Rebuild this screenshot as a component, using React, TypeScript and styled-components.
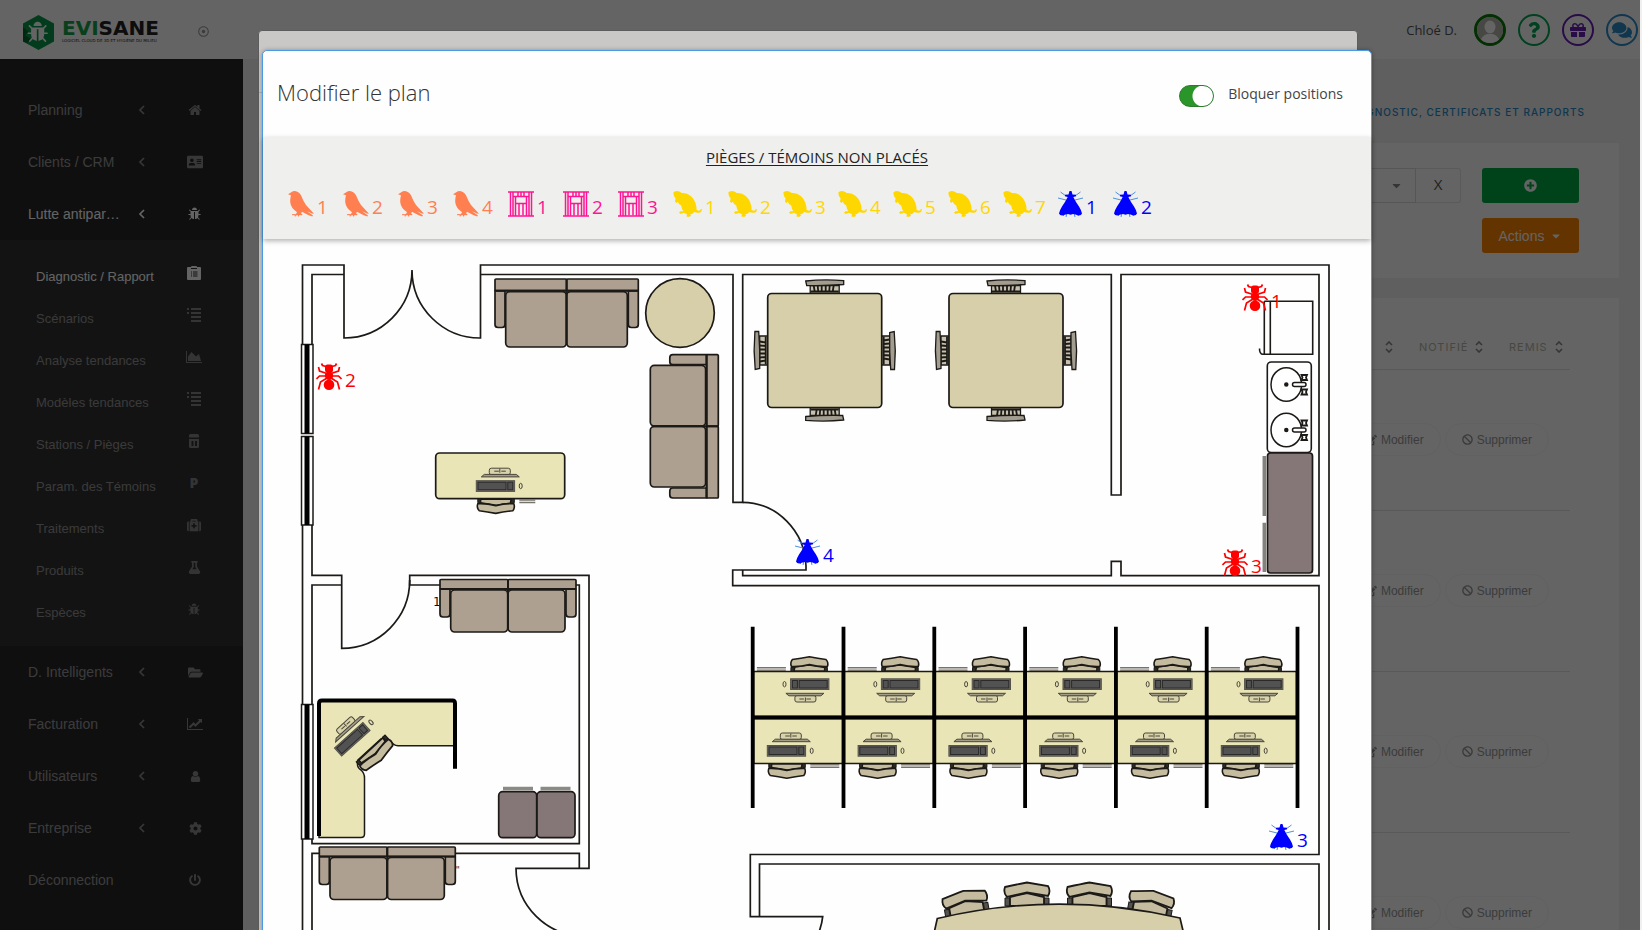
import React from "react";
import styled, { createGlobalStyle } from "styled-components";
import {
  FaAddressCard,
  FaBan,
  FaCaretDown,
  FaCog,
  FaComments,
  FaEdit,
  FaFlask,
  FaFolderOpen,
  FaGift,
  FaMedkit,
  FaPlusCircle,
  FaPowerOff,
  FaQuestion,
  FaRegDotCircle,
} from "react-icons/fa";

const sans = `"Liberation Sans", Arial, sans-serif`;
const humanist = `"Open Sans", "Noto Sans", sans-serif`;
const geometric = `Inter, "Liberation Sans", sans-serif`;

const GlobalStyle = createGlobalStyle`
  *, *::before, *::after { box-sizing: border-box; }
  body { margin: 0; font-family: ${sans}; font-size: 14px; color: #333; }
  button, select, input { font: inherit; color: inherit; margin: 0; }
  a { color: inherit; text-decoration: none; }
  h1, h2, p { margin: 0; }
  ul { list-style: none; margin: 0; padding: 0; }
`;

/* ---------- Page shell ---------- */

const Page = styled.div`
  position: relative;
  display: flex;
  flex-direction: column;
  height: 100vh;
  overflow: hidden;
  background: #f2f2f2;
  border-right: 2px solid #f0f0f0;
`;

const TopBar = styled.header`
  flex: none;
  display: flex;
  align-items: center;
  height: 59px;
  padding: 0 2px 0 23px;
  background: #fff;
`;

const Brand = styled.a`
  display: flex;
  align-items: center;
  gap: 8px;
  width: 175px;
  height: 60px;
  padding-top: 5px;
`;

const BrandText = styled.span`
  display: flex;
  flex-direction: column;
  padding-bottom: 3px;
  white-space: nowrap;
`;

const BrandName = styled.span`
  font: 700 20px/20px "DejaVu Sans", sans-serif;
  color: #222;
  b { color: #16a34a; }
`;

const BrandTagline = styled.span`
  font: 400 4px/5px "DejaVu Sans", sans-serif;
  color: #222;
`;

const PinToggle = styled.button`
  display: flex;
  padding: 4px 0 0;
  border: 0;
  background: none;
  font-size: 11px;
  color: #999;
`;

const Account = styled.div`
  display: flex;
  align-items: center;
  gap: 12px;
  margin-left: auto;
`;

const UserName = styled.span`
  margin-right: 5px;
  font: 400 13px/20px ${humanist};
  color: #555;
`;

const RoundButton = styled.button<{ $color: string; $ring?: number }>`
  display: flex;
  align-items: center;
  justify-content: center;
  width: 32px;
  height: 32px;
  padding: 0;
  overflow: hidden;
  border: ${(p) => p.$ring ?? 2}px solid ${(p) => p.$color};
  border-radius: 50%;
  background: #fff;
  color: ${(p) => p.$color};
  font-size: 16px;
`;

const Body = styled.div`
  flex: 1;
  display: flex;
  min-height: 0;
`;

/* ---------- Sidebar ---------- */

const Sidebar = styled.nav`
  flex: none;
  width: 243px;
  padding-top: 25px;
  background: #292929;
`;

const MenuLink = styled.a<{ $active?: boolean }>`
  display: grid;
  grid-template-columns: 106px 16px 1fr;
  align-items: center;
  height: 52px;
  padding: 0 35px 0 28px;
  color: ${(p) => (p.$active ? "#fff" : "#999")};
  svg { color: ${(p) => (p.$active ? "#fff" : "#8c8c8c")}; }
`;

const MenuIcon = styled.span`
  display: flex;
  justify-content: center;
  width: 26px;
  margin-left: auto;
  font-size: 14px;
`;

const SubMenu = styled.ul`
  padding: 14px 0;
  background: #333;
`;

const SubLink = styled.a<{ $active?: boolean }>`
  display: flex;
  align-items: center;
  justify-content: space-between;
  height: 42px;
  padding: 2px 36px 0;
  font-size: 13px;
  color: ${(p) => (p.$active ? "#fff" : "#959595")};
  svg, b { color: ${(p) => (p.$active ? "#fff" : "#868686")}; }
`;

const SubIcon = styled.span`
  display: flex;
  justify-content: center;
  width: 26px;
  padding-bottom: 6px;
  font: 800 14px/14px "Open Sans", sans-serif;
`;

/* ---------- Content behind the dialog ---------- */

const Content = styled.main`
  flex: 1;
  min-width: 0;
  padding: 45px 21px 0;
`;

const Breadcrumb = styled.p`
  height: 39px;
  padding-right: 34px;
  text-align: right;
  font: 500 10px/16px ${geometric};
  letter-spacing: 1px;
  color: #2a8cc9;
`;

const Card = styled.section`
  background: #fff;
  margin-bottom: 20px;
`;

const FilterCard = styled(Card)`
  display: flex;
  justify-content: flex-end;
  gap: 21px;
  height: 135px;
  padding: 25px 40px;
`;

const FilterGroup = styled.div`
  display: flex;
  height: 35px;
`;

const FilterSelect = styled.div`
  position: relative;
  display: flex;
  align-items: center;
  width: 360px;
  color: #888;
  svg { position: absolute; right: 13px; pointer-events: none; }
  select {
    width: 100%;
    height: 100%;
    appearance: none;
    border: 1px solid #ddd;
    background: #fff;
  }
`;

const ClearButton = styled.button`
  width: 45px;
  padding: 0 0 3px;
  border: 1px solid #e6e6e6;
  border-left: 0;
  border-radius: 0 3px 3px 0;
  background: #fff;
  font: 400 15px/20px ${humanist};
  color: #555;
`;

const ButtonColumn = styled.div`
  display: flex;
  flex-direction: column;
  gap: 15px;
`;

const SolidButton = styled.button<{ $color: string }>`
  display: flex;
  align-items: center;
  justify-content: center;
  gap: 6px;
  width: 97px;
  height: 35px;
  padding: 0;
  border: 0;
  border-radius: 3px;
  background: ${(p) => p.$color};
  color: #fff;
`;

const TableCard = styled(Card)`
  padding: 27px 49px 0;
`;

const ReportTable = styled.table`
  width: 100%;
  table-layout: fixed;
  border-collapse: collapse;
  th {
    height: 44px;
    padding: 0 0 0 19px;
    text-align: left;
    font: 400 11px/14px ${geometric};
    letter-spacing: 1px;
    color: #b8b7aa;
    border-bottom: 1px solid #e2e2e2;
  }
  td { height: 161px; padding: 0; border-bottom: 1px solid #e2e2e2; }
  tr:first-child td { height: 141px; }
`;

const ColumnHead = styled.span`
  display: flex;
  align-items: center;
  justify-content: space-between;
  padding: 0 7px 0 0;
`;

const RowActions = styled.div`
  display: flex;
  justify-content: flex-end;
  gap: 4px;
  padding-right: 21px;
`;

const PillButton = styled.button`
  display: flex;
  align-items: center;
  gap: 4px;
  height: 33px;
  padding: 0 16px;
  border: 1px solid #f7f7f7;
  border-radius: 17px;
  background: none;
  font-size: 12px;
  color: #999;
`;

/* ---------- Layers over the page ---------- */

const Backdrop = styled.div<{ $dim: number; $shift: number }>`
  position: absolute;
  inset: 0;
  display: flex;
  justify-content: center;
  align-items: flex-start;
  padding-right: ${(p) => p.$shift}px;
  background: rgba(0, 0, 0, ${(p) => p.$dim});
`;

const BackDialog = styled.div`
  width: 1100px;
  max-width: 92%;
  height: 100%;
  margin-top: 30px;
  border: 1px solid #777;
  border-radius: 4px;
  background: #fffefb;
`;

const BackDialogHeader = styled.div`
  height: 62px;
  border-bottom: 1px solid #ddd;
`;

const Dialog = styled.section`
  width: 1110px;
  max-width: 94%;
  margin-top: 50px;
  border: 1px solid #4a9ae6;
  border-radius: 5px;
  background: #fefefe;
  box-shadow: 0 0 4px rgba(0, 0, 0, 0.3);
`;

const DialogHeader = styled.header`
  display: flex;
  align-items: center;
  justify-content: space-between;
  height: 86px;
  padding: 0 28px 4px 14px;
`;

const DialogTitle = styled.h1`
  font: 300 22px/30px ${humanist};
  color: #333;
`;

const SwitchLabel = styled.label`
  display: flex;
  align-items: center;
  gap: 14px;
  padding-top: 4px;
  font: 400 14px/20px ${humanist};
  color: #444;
`;

const SwitchInput = styled.input`
  appearance: none;
  width: 35px;
  height: 22px;
  margin-top: 4px;
  border: 1px solid #2c7a2c;
  border-radius: 11px;
  background: radial-gradient(circle at 23px 10px, #fff 10px, #2a962a 11px);
`;

const TrayPanel = styled.section`
  position: relative;
  height: 102px;
  padding-top: 9px;
  background: #efefed;
  box-shadow: 0 2px 5px rgba(0, 0, 0, 0.3);
`;

const TrayTitle = styled.h2`
  text-align: center;
  font: 400 15px/22px ${humanist};
  text-decoration: underline;
  text-underline-offset: 2px;
  color: #222;
`;

const TrayList = styled.ul`
  display: flex;
  padding: 23px 25px 0;
`;

const TrayItem = styled.li`
  width: 55px;
`;

const TrapTag = styled.span<{ $color: string }>`
  display: inline-flex;
  align-items: flex-end;
  gap: 3px;
  font: 400 19px/20px ${humanist};
  color: ${(p) => p.$color};
  svg { display: block; flex: none; }
`;

const Plan = styled.div`
  position: relative;
`;

const PlanDrawing = styled.svg`
  display: block;
  width: 100%;
  height: auto;
`;

const Pin = styled.button<{ $x: number; $y: number }>`
  position: absolute;
  left: ${(p) => p.$x}%;
  top: ${(p) => p.$y}%;
  padding: 0;
  border: 0;
  background: none;
`;

/* ---------- Small glyphs ---------- */

const BUG =
  "M1632 960q0 26-19 45t-45 19h-224q0 171-67 290l208 209q19 19 19 45t-19 45q-18 19-45 19t-45-19l-198-197q-5 5-15 13t-42 28.5-65 36.5-82 29-97 13v-896h-128v896q-51 0-101.5-13.5t-87-33-66-39-43.5-32.5l-15-14-183 207q-20 21-48 21-24 0-43-16-19-18-20.5-44.5t15.5-46.5l202-227q-58-114-58-274h-224q-26 0-45-19t-19-45 19-45 45-19h224v-294l-173-173q-19-19-19-45t19-45 45-19 45 19l173 173h844l173-173q19-19 45-19t45 19 19 45-19 45l-173 173v294h224q26 0 45 19t19 45zm-480-576h-640q0-133 93.5-226.5t226.5-93.5 226.5 93.5 93.5 226.5z";
const HOME =
  "M1472 992v480q0 26-19 45t-45 19h-384v-384h-256v384h-384q-26 0-45-19t-19-45v-480q0-1 .5-3t.5-3l575-474 575 474q1 2 1 6zm223-69l-62 74q-8 9-21 11h-3q-13 0-21-7l-692-577-692 577q-12 8-24 7-13-2-21-11l-62-74q-8-10-7-23.5t11-21.5l719-599q32-26 76-26t76 26l244 204v-195q0-14 9-23t23-9h192q14 0 23 9t9 23v408l219 182q10 8 11 21.5t-7 23.5z";
const TREND =
  "M2048 1536v128h-2048v-1536h128v1408h1920zm-128-1248v435q0 21-19.5 29.5t-35.5-7.5l-121-121-633 633q-10 10-23 10t-23-10l-233-233-416 416-192-192 585-585q10-10 23-10t23 10l233 233 464-464-121-121q-16-16-7.5-35.5t29.5-19.5h435q14 0 23 9t9 23z";
const AREA = "M2048 1536v128h-2048v-1536h128v1408h1920zm-384-1024l256 896h-1664v-576l448-576 576 576z";
const PERSON =
  "M1536 1399q0 109-62.5 187t-150.5 78h-854q-88 0-150.5-78t-62.5-187q0-85 8.5-160.5t31.5-152 58.5-131 94-89 134.5-34.5q131 128 313 128t313-128q76 0 134.5 34.5t94 89 58.5 131 31.5 152 8.5 160.5zm-256-887q0 159-112.5 271.5t-271.5 112.5-271.5-112.5-112.5-271.5 112.5-271.5 271.5-112.5 271.5 112.5 112.5 271.5z";

const Awesome = ({ d, w = 1792, size = 14 }: { d: string; w?: number; size?: number }) => (
  <svg width={(size * w) / 1792} height={size} viewBox={`0 0 ${w} 1792`} fill="currentColor">
    <path d={d} />
  </svg>
);

const Chevron = () => (
  <svg width="16" height="12" viewBox="0 0 16 12" fill="none" stroke="currentColor" strokeWidth="1.700">
    <path d="M10 2 6 6l4 4" />
  </svg>
);

const ListIcon = () => (
  <svg width="14" height="14" viewBox="0 0 14 14" fill="currentColor">
    <path d="M0 0h2v2H0zM0 4h2v2H0zM4 0h10v2H4zM4 4h10v2H4zM4 8h10v2H4zM4 12h10v2H4z" />
  </svg>
);

const ClipboardIcon = () => (
  <svg width="14" height="14" viewBox="0 0 14 14">
    <path d="M0 2q0-1 1-1h3q0-1 1-1h4q1 0 1 1h3q1 0 1 1v11q0 1-1 1H1q-1 0-1-1z" fill="currentColor" />
    <path d="M4 2.500h6M4 6h1M6 6h4.500M4 8h1M6 8h4.500M4 10h1M6 10h4.500" stroke="#333" fill="none" />
  </svg>
);

const StationIcon = () => (
  <svg width="10" height="14" viewBox="0 0 10 14" fill="currentColor">
    <path d="M0 1.500Q0 0 1.500 0h7Q10 0 10 1.500V3.500H0zM0 5h10v7.500q0 1.500-1.500 1.500h-7Q0 14 0 12.500zM2.500 7v5h2V7zM6 7v5h2V7z" fillRule="evenodd" />
  </svg>
);

const SortIcon = () => (
  <svg width="8" height="12" viewBox="0 0 8 12" fill="none" stroke="#888" strokeWidth="1.600">
    <path d="M1 4l3-3 3 3M1 8l3 3 3-3" />
  </svg>
);

const HexLogo = () => (
  <svg width="31" height="35" viewBox="0 0 31 35">
    <path d="M15.500 0 31 8.500v18L15.500 35 0 26.500v-18z" fill="#0b9b4a" />
    <path d="M0 12 6 17 2 20 8 24 4 28 0 26.500z" fill="#056b30" />
    <g transform="translate(4 6) scale(.0128)" fill="#fff">
      <path d={BUG} />
    </g>
  </svg>
);

const AvatarIcon = () => (
  <svg width="26" height="26" viewBox="0 0 26 26">
    <rect width="26" height="26" fill="#b5b5ac" />
    <ellipse cx="13" cy="10" rx="5.500" ry="6.500" fill="#fff" />
    <path d="M3 26q1-7 7-9h6q6 2 7 9z" fill="#fff" />
  </svg>
);

/* ---------- Trap glyphs ---------- */

type Kind = "bird" | "cage" | "rat" | "fly" | "ant";

const kindColor: Record<Kind, string> = {
  bird: "#ff7f50",
  cage: "#ff1493",
  rat: "#ffd700",
  fly: "#0000ff",
  ant: "#ff0000",
};

const TrapGlyph = ({ kind }: { kind: Kind }) => {
  switch (kind) {
    case "bird":
      return (
        <svg width="26" height="26" viewBox="0 0 26 26" fill="currentColor">
          <path d="M0 3.200 3.300 1.300Q5.200-.3 8 .2 12 1 14 6.500q1.500 4 4 7.500l8 8.700-2-.2-5-2.300 6 4.300-.8 1-4-1.500-6.200-3.200-1 1.700 1.500.8-.5 1-2.500-.3-.5 1.700-1.200-.6.200-1-2.200.4-.4 1.200-1-.7.300-1L4 24.300l.3-1.200 3.200.2 1.500-1.500-.7-1.300Q3 17 2.300 11.500q-.4-3 .7-7.200z" />
        </svg>
      );
    case "cage":
      return (
        <svg width="26" height="26" viewBox="0 0 26 26" fill="none" stroke="currentColor" strokeWidth="1.500">
          <path d="M0 1h26M0 25h26M2.500 1v24M5 1v24M21 1v24M23.500 1v24" />
          <path d="M5 5.500h16M7.500 12.500h11M7.500 5v20M18.500 5v20M10 1v4M13 1v4M16 1v4M11 12.500v12M15 12.500v12" />
        </svg>
      );
    case "rat":
      return (
        <svg width="29" height="26" viewBox="0 0 30 26" preserveAspectRatio="none" fill="currentColor">
          <path d="M.3 1.500Q3-.5 6.500.4 8 1 9 2q5.500-.5 9 2.700 5 4 6 10.300.5 2 .3 4l2.500.8q1.800-.2 2-1.800l1.200.2q-.2 3-2.800 3.500-3 .3-5.200-.7-1.500 2-4.500 2.500l1.300.8-1.500 1.500-3.300-.1 .4-2.400-3-1.500-3.500 1.200-1.700-1.600 1.500-1.200 3 .1Q9 18 8.500 14.500L6.300 13 5 10.700 3.400 12 2 10.500l.7-3L1 5z" />
        </svg>
      );
    case "fly":
      return (
        <svg width="25" height="26" viewBox="0 0 25 26">
          <path d="M2.500 1 8 5M22.500 1 17 5M0 7l8 2M25 7l-8 2M4 23l2 2M9 22l-1 4M16 22l1 4M21 23l-1 2" stroke="#4f8fe0" strokeWidth="1" fill="none" />
          <path d="M11.500 0h2l1 3.500 3.500.2v1.500l-2.700.8q2.700 5.500 5.700 9.500 2.500 4 3 7-1 2.500-4.500 1.800L17.500 23.500l-2.500-.5-2.500.8-2.500-.8-2.500.5-2 .8Q2 25 1 22.500q.5-3 3-7Q7 11.500 9.700 6L7 5.200V3.700l3.500-.2z" fill="currentColor" />
        </svg>
      );
    case "ant":
      return (
        <svg width="26" height="27" viewBox="0 0 26 27" fill="none" stroke="currentColor" strokeWidth="1.700">
          <path d="M5.500.5 6.500 2.500 10 3.500M20.500.5 19.500 2.500 16 3.500M2.500 4l1 4 7.500 2.500M23.500 4l-1 4-7.500 2.500M.5 16l3-3H11M25.500 16l-3-3H15M2.500 26.500 4.500 19l6.500-4M23.500 26.500 21.500 19l-6.500-4" />
          <g fill="currentColor" stroke="none">
            <rect x="9" y="1.500" width="8" height="8" rx="2.500" />
            <ellipse cx="13" cy="12.800" rx="4.200" ry="4.200" />
            <ellipse cx="13" cy="21.700" rx="5.300" ry="5.300" />
          </g>
        </svg>
      );
  }
};

const Trap = ({ kind, n }: { kind: Kind; n: number }) => (
  <TrapTag $color={kindColor[kind]}>
    <TrapGlyph kind={kind} />
    {n}
  </TrapTag>
);

/* ---------- Floor plan ---------- */

const INK = "#1c1a17";
const CLOTH = "#ada090";
const WOOD = "#d6cfaa";
const DESK = "#e9e5b6";
const CABINET = "#857677";
const SEAT = "#c5bca0";

const Sofa = ({ w, h, back, arm }: { w: number; h: number; back: number; arm: number }) => {
  const mid = w / 2;
  return (
    <g fill={CLOTH} stroke={INK} strokeWidth="1.700">
      <path d={`M0 ${back}V${arm - 3}q0 3 3 3h4q3 0 3-3V${back}z`} />
      <path d={`M${w - 10} ${back}V${arm - 3}q0 3 3 3h4q3 0 3-3V${back}z`} />
      <rect x="0" y="0" width={mid} height={back} rx="1" />
      <rect x={mid} y="0" width={mid} height={back} rx="1" />
      <rect x="10.700" y={back + 1} width={mid - 11} height={h - back - 1} rx="4" />
      <rect x={mid} y={back + 1} width={mid - 11} height={h - back - 1} rx="4" />
      <path d={`M0 ${back}H${w}M${mid} 0V${h - 2}`} strokeWidth="2" />
    </g>
  );
};

const Computer = () => (
  <g stroke="#4a463c" strokeWidth="1">
    <rect x="13" y="-30.500" width="21" height="6.500" rx="2" fill="#d8d3a8" />
    <path d="M18-27.500h4.500M25-27.500h4.500M23.500-30v4" fill="none" />
    <path d="M8-24.300H40L43-21.800H5z" fill="#a29d86" />
    <rect x="0" y="-18" width="38.300" height="10.700" fill="#6a6862" stroke="#55534c" />
    <rect x="1.700" y="-16.500" width="28" height="7.500" fill="#525252" stroke="#2a2a2a" />
    <rect x="31.500" y="-16.500" width="5" height="7.500" fill="#525252" stroke="#2a2a2a" />
    <ellipse cx="44.400" cy="-12.700" rx="1.500" ry="2.700" fill={DESK} />
  </g>
);

const OfficeChair = () => (
  <g stroke={INK} strokeWidth="1.600" fill={SEAT}>
    <path d="M4 .5H35L34 4.500 20 6.500 4 4z" />
    <path d="M1.500 5Q10 4.500 19.500 7 29 4.500 37.500 5q1.500 4-1 7Q28 13 19.500 14.700 11 13 3 12 0 9 1.500 5z" />
    <path d="M1.500 0h3v4h-3zM35 0h3v4h-3z" fill="#2d2b27" strokeWidth="1" />
  </g>
);

const Drawers = ({ w }: { w: number }) => (
  <path d={`M43 1.200h${w}M43 3.700h${w}`} stroke="#77736a" strokeWidth="1.500" />
);

const Workstation = () => (
  <g>
    <rect x="1" y="1" width="89" height="45" rx="1" fill={DESK} stroke={INK} strokeWidth="1.500" />
    <g transform="translate(14.600 46)">
      <Computer />
      <OfficeChair />
      <Drawers w={29} />
    </g>
  </g>
);

const DiningChair = () => (
  <g stroke={INK} strokeWidth="1.300" fill="#a39d90">
    <path d="M-14.500 14V6h29v8z" fill="#c7c0ae" />
    <path d="M-11 6l1 6M-7 6l.5 6M-3 6v6M1 6v6M5 6l-.5 6M9 6l-1 6M-14 12h28" strokeWidth="1.800" />
    <path d="M-19 1.500Q0-.5 19 1.200V5Q0 6.500-18 6z" />
  </g>
);

const DiningTable = () => (
  <g>
    {[0, 90, 180, 270].map((a) => (
      <g key={a} transform={`rotate(${a}) translate(0 -71)`}>
        <DiningChair />
      </g>
    ))}
    <rect x="-57" y="-57" width="114" height="114" rx="4" fill={WOOD} stroke={INK} strokeWidth="1.700" />
  </g>
);

const MeetingChair = () => (
  <g stroke={INK} strokeWidth="1.800" fill={SEAT}>
    <path d="M-17 0v-9L0-13 17-9V0z" />
    <path d="M-22-19Q-8-22 0-23.500 9-22 21-20q3 5 0 10L0-13.500-20-9q-4-4-2-10z" />
    <path d="M-22-8h4.500v8H-22zM17.500-8H22v8h-4.500z" fill="#55534e" strokeWidth="1" />
  </g>
);

const Window = ({ y, h }: { y: number; h: number }) => (
  <g>
    <rect x="301.500" y={y} width="11.500" height={h} fill="#fff" stroke={INK} strokeWidth="1.500" />
    <rect x="304.500" y={y} width="5" height={h} fill="#000" />
  </g>
);

const Basin = ({ y }: { y: number }) => (
  <g fill="#fff" stroke={INK} strokeWidth="1.500">
    <ellipse cx="1286.300" cy={y} rx="15.300" ry="16.800" />
    <path d="M1301.500 375h5.500l-1 2.500 1 2.500h-5.500l1-2.500zM1301.500 389.500h5.500l-1 2.500 1 2.500h-5.500l1-2.500z" transform={`translate(0 ${y - 384.500})`} strokeWidth="1.800" />
    <rect x="1292.500" y={y - 2} width="13.500" height="4" rx="2" />
    <circle cx="1286.300" cy={y} r="1.500" fill={INK} />
  </g>
);

const BAY = 90.8;

const FloorPlan = () => (
  <PlanDrawing viewBox="263 239 1108 720" role="img" aria-label="Plan des locaux">
    <g fill="none" stroke={INK} strokeWidth="1.700">
      <path d="M302.500 344V265H344V338A68 68 0 0 0 412 270A68 68 0 0 0 480.500 338V265H1329V960" />
      <path d="M312 344V274.500H344" />
      <path d="M480.500 274.500H733V502.300H742.700V274.500H1111.300V495H1121V274.500H1319V575.700H1121V561.300H1111.300V575.700H742.700V570" />
      <path d="M742.700 502.300A64 66 0 0 1 806 566V570H732.700V585.700H1319V854.500H750.300V916.700H822.700Q822 924 819 932" />
      <path d="M759.500 916.700V864H1319V960" />
      <path d="M302.500 525V704.500M302.500 839V960" />
      <path d="M312 525V575.300H341.700V648.300A68 68 0 0 0 409.700 580V575.300H589V868.300H516A68 68 0 0 0 584 936" />
      <path d="M341.700 585H312V704.500M409.700 580V585H579.300V843.700H312V839" />
      <path d="M312 960V853.300H579.300V868.300" />
    </g>
    <Window y={344.500} h={89} />
    <Window y={436.500} h={88.500} />
    <Window y={704.500} h={134.500} />

    <g transform="translate(495 279)"><Sofa w={143.300} h={68} back={11.700} arm={48.500} /></g>
    <g transform="translate(718.300 354.700) rotate(90)"><Sofa w={143.300} h={68} back={11.700} arm={48.500} /></g>
    <g transform="translate(440 579.500)"><Sofa w={136} h={52.500} back={9.500} arm={37.500} /></g>
    <g transform="translate(319.300 847)"><Sofa w={136} h={52.500} back={9.500} arm={37.500} /></g>
    <circle cx="680" cy="313" r="34.300" fill={WOOD} stroke={INK} strokeWidth="1.700" />

    <rect x="435.700" y="453" width="129" height="45.700" rx="4" fill={DESK} stroke={INK} strokeWidth="1.700" />
    <g transform="translate(476.300 498.700)">
      <Computer />
      <OfficeChair />
      <Drawers w={16} />
    </g>

    <path d="M319 701H455V745.700H398Q393 745.500 391 741 387 737 381 739L358 760Q356 767 361 770 364.500 773 364.500 778V834q0 3.500-3.500 3.500H319z" fill={DESK} stroke={INK} strokeWidth="1.500" />
    <path d="M319 836V703.500Q319 700.500 322 700.500H452.500Q455 700.500 455 703.500V768.700" fill="none" stroke="#000" strokeWidth="4" />
    <g transform="translate(346.500 761.500) rotate(-42)"><Computer /></g>
    <g transform="translate(355 763) rotate(-43) scale(1.080)"><OfficeChair /></g>

    <path d="M503 788.500h30M540.500 788.500h30" stroke="#8b8b86" strokeWidth="3.500" />
    <g fill={CABINET} stroke={INK} strokeWidth="1.700">
      <rect x="498.700" y="791.700" width="38" height="46" rx="4" />
      <rect x="537" y="791.700" width="38" height="46" rx="4" />
    </g>
    <text x="433" y="606" fontFamily="DejaVu Sans Mono, monospace" fontSize="12" fill="#111">1</text>
    <text x="455" y="873" fontFamily="DejaVu Sans Mono, monospace" fontSize="9" fill="#333">"</text>

    <g transform="translate(824.700 350.500)"><DiningTable /></g>
    <g transform="translate(1006 350.500)"><DiningTable /></g>

    <g fill="none" stroke={INK} strokeWidth="1.600">
      <path d="M1264.300 301.300H1312.700V354.300H1263Q1259.500 354.300 1259.500 348.500M1264.300 301.300V354M1270.300 301.300V354" />
      <rect x="1267.300" y="362" width="44" height="90.500" rx="4" />
    </g>
    <Basin y={384.500} />
    <Basin y={430} />
    <rect x="1267.500" y="453" width="45" height="120" rx="3" fill={CABINET} stroke={INK} strokeWidth="1.700" />
    <path d="M1264.300 456V516M1264.300 522.700V572" stroke="#85827c" strokeWidth="3.500" />

    {[0, 1, 2, 3, 4, 5].map((i) => (
      <g key={i} transform={`translate(${752.700 + i * BAY} 717.500)`}>
        <Workstation />
        <g transform={`rotate(180) translate(${-BAY} 0)`}><Workstation /></g>
      </g>
    ))}
    <path d={`M752.700 717.500H1297.500${[0, 1, 2, 3, 4, 5, 6].map((i) => `M${752.700 + i * BAY} 626.700V808`).join("")}`} stroke="#000" strokeWidth="3.800" />

    <g transform="translate(967.500 914) rotate(-10)"><MeetingChair /></g>
    <g transform="translate(1027 906)"><MeetingChair /></g>
    <g transform="translate(1089.500 906)"><MeetingChair /></g>
    <g transform="translate(1149 914) rotate(11)"><MeetingChair /></g>
    <path d="M928 960 937.300 918.500Q1058 890 1180 918L1190 960z" fill={WOOD} stroke={INK} strokeWidth="1.700" />
  </PlanDrawing>
);

/* ---------- Data ---------- */

const mainMenu = [
  { label: "Planning", icon: <Awesome d={HOME} /> },
  { label: "Clients / CRM", icon: <FaAddressCard size={16} /> },
  { label: "Lutte antipar…", icon: <Awesome d={BUG} />, active: true },
];

const subMenu = [
  { label: "Diagnostic / Rapport", icon: <ClipboardIcon />, active: true },
  { label: "Scénarios", icon: <ListIcon /> },
  { label: "Analyse tendances", icon: <Awesome d={AREA} w={2048} /> },
  { label: "Modèles tendances", icon: <ListIcon /> },
  { label: "Stations / Pièges", icon: <StationIcon /> },
  { label: "Param. des Témoins", icon: <b>P</b> },
  { label: "Traitements", icon: <FaMedkit size={14} /> },
  { label: "Produits", icon: <FaFlask size={13} /> },
  { label: "Espèces", icon: <Awesome d={BUG} size={13} /> },
];

const lowerMenu = [
  { label: "D. Intelligents", icon: <FaFolderOpen size={15} /> },
  { label: "Facturation", icon: <Awesome d={TREND} w={2048} /> },
  { label: "Utilisateurs", icon: <Awesome d={PERSON} size={13} /> },
  { label: "Entreprise", icon: <FaCog size={13} /> },
  { label: "Déconnection", icon: <FaPowerOff size={12} />, leaf: true },
];

const tray: [Kind, number][] = [
  ["bird", 4],
  ["cage", 3],
  ["rat", 7],
  ["fly", 2],
];

const placed: { kind: Kind; n: number; x: number; y: number }[] = [
  { kind: "ant", n: 2, x: 53, y: 124 },
  { kind: "ant", n: 1, x: 979, y: 45 },
  { kind: "ant", n: 3, x: 959, y: 310 },
  { kind: "fly", n: 4, x: 532, y: 300 },
  { kind: "fly", n: 3, x: 1006, y: 585 },
];

type Entry = { label: string; icon: React.ReactNode; active?: boolean; leaf?: boolean };

const MenuEntry = ({ label, icon, active, leaf }: Entry) => (
  <li>
    <MenuLink href="#" $active={active}>
      <span>{label}</span>
      {leaf ? <span /> : <Chevron />}
      <MenuIcon>{icon}</MenuIcon>
    </MenuLink>
  </li>
);

export default function App() {
  return (
    <>
      <GlobalStyle />
      <Page>
        <TopBar>
          <Brand href="#">
            <HexLogo />
            <BrandText>
              <BrandName><b>EVI</b>SANE</BrandName>
              <BrandTagline>LOGICIEL CLOUD DE 3D ET HYGIÈNE DU MILIEU</BrandTagline>
            </BrandText>
          </Brand>
          <PinToggle aria-label="Menu"><FaRegDotCircle /></PinToggle>
          <Account>
            <UserName>Chloé D.</UserName>
            <RoundButton $color="#087a08" $ring={3} aria-label="Profil"><AvatarIcon /></RoundButton>
            <RoundButton $color="#00a651" aria-label="Aide"><FaQuestion /></RoundButton>
            <RoundButton $color="#6a1fb5" aria-label="Nouveautés"><FaGift /></RoundButton>
            <RoundButton $color="#2a8cc9" aria-label="Messages"><FaComments size={20} /></RoundButton>
          </Account>
        </TopBar>
        <Body>
          <Sidebar>
            <ul>
              {mainMenu.map((m) => <MenuEntry key={m.label} {...m} />)}
            </ul>
            <SubMenu>
              {subMenu.map((m) => (
                <li key={m.label}>
                  <SubLink href="#" $active={m.active}>
                    <span>{m.label}</span>
                    <SubIcon>{m.icon}</SubIcon>
                  </SubLink>
                </li>
              ))}
            </SubMenu>
            <ul>
              {lowerMenu.map((m) => <MenuEntry key={m.label} {...m} />)}
            </ul>
          </Sidebar>
          <Content>
            <Breadcrumb>DIAGNOSTIC, CERTIFICATS ET RAPPORTS</Breadcrumb>
            <FilterCard>
              <FilterGroup>
                <FilterSelect>
                  <select aria-label="Filtre"><option /></select>
                  <FaCaretDown size={13} />
                </FilterSelect>
                <ClearButton>X</ClearButton>
              </FilterGroup>
              <ButtonColumn>
                <SolidButton $color="#00aa47" aria-label="Ajouter"><FaPlusCircle size={13} /></SolidButton>
                <SolidButton $color="#ff8400">Actions <FaCaretDown size={12} /></SolidButton>
              </ButtonColumn>
            </FilterCard>
            <TableCard>
              <ReportTable>
                <colgroup>
                  <col />
                  <col width="90" />
                  <col width="80" />
                </colgroup>
                <thead>
                  <tr>
                    <th><ColumnHead><span /><SortIcon /></ColumnHead></th>
                    <th><ColumnHead>NOTIFIÉ<SortIcon /></ColumnHead></th>
                    <th><ColumnHead>REMIS<SortIcon /></ColumnHead></th>
                  </tr>
                </thead>
                <tbody>
                  {[1, 2, 3, 4].map((row) => (
                    <tr key={row}>
                      <td colSpan={3}>
                        <RowActions>
                          <PillButton><FaEdit size={12} />Modifier</PillButton>
                          <PillButton><FaBan size={11} />Supprimer</PillButton>
                        </RowActions>
                      </td>
                    </tr>
                  ))}
                </tbody>
              </ReportTable>
            </TableCard>
          </Content>
        </Body>

        <Backdrop $dim={0.5} $shift={24}>
          <BackDialog><BackDialogHeader /></BackDialog>
        </Backdrop>
        <Backdrop $dim={0.21} $shift={6}>
          <Dialog role="dialog" aria-labelledby="plan-title">
            <DialogHeader>
              <DialogTitle id="plan-title">Modifier le plan</DialogTitle>
              <SwitchLabel>
                <SwitchInput type="checkbox" role="switch" defaultChecked />
                Bloquer positions
              </SwitchLabel>
            </DialogHeader>
            <TrayPanel>
              <TrayTitle>PIÈGES / TÉMOINS NON PLACÉS</TrayTitle>
              <TrayList>
                {tray.flatMap(([kind, count]) =>
                  Array.from({ length: count }, (_, i) => (
                    <TrayItem key={`${kind}${i}`}><Trap kind={kind} n={i + 1} /></TrayItem>
                  ))
                )}
              </TrayList>
            </TrayPanel>
            <Plan>
              <FloorPlan />
              {placed.map((p) => (
                <Pin key={`${p.kind}${p.n}`} $x={(p.x / 1108) * 100} $y={(p.y / 720) * 100}>
                  <Trap kind={p.kind} n={p.n} />
                </Pin>
              ))}
            </Plan>
          </Dialog>
        </Backdrop>
      </Page>
    </>
  );
}
